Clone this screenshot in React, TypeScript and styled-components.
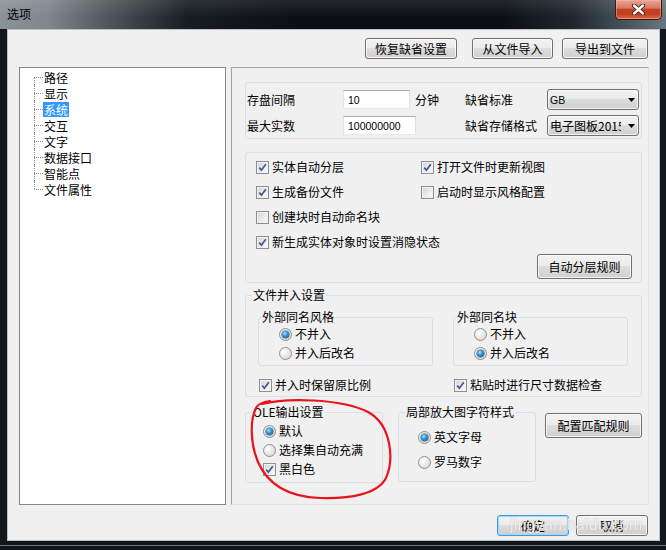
import React from 'react';
import styled, { createGlobalStyle } from 'styled-components';

const CJK = `"Noto Sans CJK SC", "Noto Sans CJK JP", sans-serif`;
const LATIN = `"Liberation Sans", Arial, sans-serif`;

const GlobalStyle = createGlobalStyle`
  html, body { margin: 0; padding: 0; background: #ffffff; }
  body { font-family: ${CJK}; font-size: 12px; color: #000; }
  * { box-sizing: border-box; }
`;

const Window = styled.div`
  position: relative;
  width: 666px;
  height: 550px;
  display: flex;
  flex-direction: column;
  background: #12171b;
  overflow: hidden;
`;

const TitleBar = styled.div`
  height: 29px;
  flex: none;
  display: flex;
  align-items: flex-start;
  padding: 0 4px 0 7px;
  background:
    linear-gradient(to bottom, rgba(255, 255, 255, 0.1), rgba(255, 255, 255, 0) 60%),
    linear-gradient(
      to right,
      #8b9297 0%,
      #80878d 7%,
      #4a5257 17%,
      #181d22 28%,
      #0b0e12 45%,
      #0b0e12 75%,
      #1f272e 86%,
      #4d5962 95%,
      #6a767f 100%
    );
`;

const Title = styled.span`
  margin-top: 6px;
  font: 12px/16px ${CJK};
  color: #000;
`;

const CloseButton = styled.div`
  margin-left: auto;
  width: 47px;
  height: 20px;
  border: 1px solid #3f1710;
  border-top: none;
  border-radius: 0 0 5px 5px;
  background: linear-gradient(#e7a796 0%, #d87763 42%, #c2411f 50%, #c0401f 75%, #dc6d4c 100%);
  box-shadow: inset 0 0 0 1px rgba(255, 190, 170, 0.45);
  display: flex;
  align-items: center;
  justify-content: center;
`;

const Frame = styled.div`
  flex: 1;
  display: flex;
  padding: 0 6px 9px 7px;
  box-shadow: inset 0 -4px 0 #12171b, inset 0 -5px 0 #6b747b;
`;

const Client = styled.div`
  position: relative;
  flex: 1;
  display: flex;
  flex-direction: column;
  background: #f0f0f0;
  border: 1px solid #b8c0c6;
  padding: 8px 10px 4px 11px;
`;

const ButtonBar = styled.div<{ $top?: number; $gap: number }>`
  flex: none;
  display: flex;
  justify-content: flex-end;
  gap: ${(p) => p.$gap}px;
  padding-right: 1px;
  margin-top: ${(p) => p.$top ?? 0}px;
`;

const PushButton = styled.button<{ $w: number; $h?: number; $primary?: boolean; $mr?: number; $mt?: number; $ml?: number }>`
  flex: none;
  width: ${(p) => p.$w}px;
  height: ${(p) => p.$h ?? 21}px;
  margin: ${(p) => p.$mt ?? 0}px ${(p) => p.$mr ?? 0}px 0 ${(p) => p.$ml ?? 0}px;
  padding: 0;
  border: 1px solid ${(p) => (p.$primary ? '#3c9be2' : '#707070')};
  border-radius: 3px;
  background: linear-gradient(#f2f2f2 0%, #ebebeb 49%, #dddddd 50%, #cfcfcf 100%);
  box-shadow: inset 0 0 0 1px ${(p) => (p.$primary ? 'rgba(150, 215, 250, 0.9)' : 'rgba(255, 255, 255, 0.75)')};
  font: 12px/1 ${CJK};
  color: #000;
  display: flex;
  align-items: center;
  justify-content: center;
`;

const Main = styled.div`
  flex: none;
  display: flex;
  gap: 5px;
  height: 438px;
  margin-top: 8px;
`;

const Tree = styled.div`
  width: 207px;
  background: #fff;
  border: 1px solid #828790;
  padding: 1px 0 0 14px;
`;

const TreeRow = styled.div`
  display: flex;
  align-items: center;
  height: 16px;
`;

const Connector = styled.span<{ $first?: boolean; $last?: boolean }>`
  align-self: stretch;
  width: 9px;
  flex: none;
  display: flex;
  flex-direction: column;
  &::before {
    content: '';
    flex: 1;
    border-left: 1px dotted ${(p) => (p.$first ? 'transparent' : '#8a8a8a')};
  }
  &::after {
    content: '';
    flex: 1;
    border-left: 1px dotted ${(p) => (p.$last ? 'transparent' : '#8a8a8a')};
    border-top: 1px dotted #8a8a8a;
  }
`;

const TreeLabel = styled.span<{ $selected?: boolean }>`
  height: 15px;
  padding: 0 1px;
  font: 12px/15px ${CJK};
  color: ${(p) => (p.$selected ? '#fff' : '#000')};
  background: ${(p) => (p.$selected ? '#3399ff' : 'transparent')};
`;

const Panel = styled.div`
  width: 418px;
  border: 1px solid;
  border-color: #a0a0a0 #e3e3e3 #e3e3e3 #a0a0a0;
  padding: 14px 6px 0 13px;
  display: flex;
  flex-direction: column;
`;

const BoxGroup = styled.div`
  border: 1px solid #d5dfe5;
  border-radius: 3px;
`;

const SettingsGrid = styled(BoxGroup)`
  display: grid;
  grid-template-columns: 96px 72px 50px 82px 92px;
  grid-auto-rows: 21px;
  row-gap: 5px;
  align-items: center;
  padding: 6px 0 2px 1px;
`;

const Text = styled.span`
  font: 12px/16px ${CJK};
  color: #000;
  white-space: nowrap;
`;

const TextBox = styled.input<{ $w: number }>`
  width: ${(p) => p.$w}px;
  height: 19px;
  padding: 0 0 0 4px;
  border: 1px solid;
  border-color: #abadb3 #dbdfe6 #e3e9ef #e2e3ea;
  background: #fff;
  font: 10.5px ${LATIN};
  color: #000;
  outline: none;
`;

const Combo = styled.div`
  width: 92px;
  height: 21px;
  border: 1px solid #707070;
  border-radius: 3px;
  background: linear-gradient(#f2f2f2 0%, #ebebeb 49%, #dddddd 50%, #cfcfcf 100%);
  box-shadow: inset 0 0 0 1px rgba(255, 255, 255, 0.7);
  display: flex;
  align-items: center;
  padding-left: 2px;
`;

const ComboText = styled.span<{ $latin?: boolean }>`
  flex: 1;
  overflow: hidden;
  white-space: nowrap;
  font: ${(p) => (p.$latin ? `10.5px/16px ${LATIN}` : `12px/16px ${CJK}`)};
  color: #000;
`;

const ComboArrow = styled.svg`
  flex: none;
  width: 7px;
  height: 4px;
  margin: 0 3px 0 7px;
`;

const CheckGroup = styled(BoxGroup)`
  margin-top: 13px;
  padding: 6px 9px 3px 10px;
  display: flex;
  flex-direction: column;
`;

const CheckGrid = styled.div<{ $cols: string }>`
  display: grid;
  grid-template-columns: ${(p) => p.$cols};
  grid-auto-rows: 16px;
  row-gap: 9px;
`;

const Option = styled.label`
  display: flex;
  align-items: center;
  gap: 3px;
  height: 16px;
  font: 12px/16px ${CJK};
  white-space: nowrap;
`;

const CheckBoxBox = styled.span`
  width: 13px;
  height: 13px;
  flex: none;
  border: 1px solid #8e8f8f;
  background: linear-gradient(135deg, #cfd3d8 0%, #eeeeee 60%, #fbfbfb 100%);
  box-shadow: inset 0 0 0 1px #f2f2f2;
  display: flex;
  align-items: center;
  justify-content: center;
`;

const RadioCircle = styled.span<{ $checked?: boolean }>`
  width: 13px;
  height: 13px;
  flex: none;
  border-radius: 50%;
  border: 1px solid #8e8f8f;
  background: radial-gradient(circle at 35% 35%, #ffffff 0%, #eaeaea 45%, #cfcfcf 100%);
  display: flex;
  align-items: center;
  justify-content: center;
  &::after {
    content: '';
    display: ${(p) => (p.$checked ? 'block' : 'none')};
    width: 7px;
    height: 7px;
    border-radius: 50%;
    background: radial-gradient(circle at 40% 35%, #a6e0fa 0%, #2f8fd3 45%, #0c4a86 100%);
    box-shadow: 0 0 0 0.5px #1d4670;
  }
`;

const ButtonRow = styled.div`
  display: flex;
  justify-content: flex-end;
  margin-top: 4px;
`;

const Fieldset = styled.fieldset<{ $w?: number; $mt?: number; $ml?: number }>`
  margin: ${(p) => p.$mt ?? 0}px 0 0 ${(p) => p.$ml ?? 0}px;
  padding: 0;
  min-width: 0;
  ${(p) => (p.$w ? `width: ${p.$w}px; flex: none;` : '')}
  border: 1px solid #d5dfe5;
  border-radius: 3px;
`;

const Legend = styled.legend<{ $ml: number }>`
  margin-left: ${(p) => p.$ml}px;
  padding: 0 1px;
  height: 16px;
  font: 12px/16px ${CJK};
  color: #000;
`;

const FieldBody = styled.div<{ $pad: string; $gap?: number }>`
  padding: ${(p) => p.$pad};
  display: flex;
  flex-direction: column;
  gap: ${(p) => p.$gap ?? 0}px;
`;

const SubGroups = styled.div`
  display: flex;
  gap: 20px;
`;

const BottomGroups = styled.div`
  display: flex;
  align-items: flex-start;
  margin-top: 7px;
`;

const Watermark = styled.span`
  position: absolute;
  left: 502px;
  top: 485px;
  font: 16px/20px ${LATIN};
  letter-spacing: 0.2px;
  color: rgba(255, 255, 255, 0.85);
  text-shadow: 0 0 1px rgba(110, 110, 110, 0.55);
  pointer-events: none;
`;

const Annotation = styled.svg`
  position: absolute;
  left: 0;
  top: 0;
  width: 666px;
  height: 550px;
  pointer-events: none;
`;

function CheckBox({ checked, label }: { checked?: boolean; label: string }) {
  return (
    <Option>
      <CheckBoxBox>
        {checked && (
          <svg width="9" height="9" viewBox="0 0 9 9">
            <path d="M1.3 4.6 L3.4 7.2 L7.8 1.2" fill="none" stroke="#42558c" strokeWidth="1.7" />
          </svg>
        )}
      </CheckBoxBox>
      {label}
    </Option>
  );
}

function Radio({ checked, label }: { checked?: boolean; label: string }) {
  return (
    <Option>
      <RadioCircle $checked={checked} />
      {label}
    </Option>
  );
}

function Select({ value, latin }: { value: string; latin?: boolean }) {
  return (
    <Combo>
      <ComboText $latin={latin}>{value}</ComboText>
      <ComboArrow viewBox="0 0 7 4">
        <polygon points="0,0 7,0 3.5,4" fill="#000" />
      </ComboArrow>
    </Combo>
  );
}

const treeItems = ['路径', '显示', '系统', '交互', '文字', '数据接口', '智能点', '文件属性'];

export default function App() {
  return (
    <>
      <GlobalStyle />
      <Window>
        <TitleBar>
          <Title>选项</Title>
          <CloseButton>
            <svg width="15" height="11" viewBox="0 0 15 11">
              <path d="M3 1.5 L12 9.5 M12 1.5 L3 9.5" stroke="#3a1a14" strokeWidth="4.2" strokeLinecap="round" />
              <path d="M3 1.5 L12 9.5 M12 1.5 L3 9.5" stroke="#ffffff" strokeWidth="2.4" strokeLinecap="round" />
            </svg>
          </CloseButton>
        </TitleBar>
        <Frame>
          <Client>
            <ButtonBar $gap={9}>
              <PushButton $w={92} $mr={6}>恢复缺省设置</PushButton>
              <PushButton $w={81}>从文件导入</PushButton>
              <PushButton $w={86}>导出到文件</PushButton>
            </ButtonBar>
            <Main>
              <Tree>
                {treeItems.map((t, i) => (
                  <TreeRow key={t}>
                    <Connector $first={i === 0} $last={i === treeItems.length - 1} />
                    <TreeLabel $selected={i === 2}>{t}</TreeLabel>
                  </TreeRow>
                ))}
              </Tree>
              <Panel>
                <SettingsGrid>
                  <Text>存盘间隔</Text>
                  <TextBox $w={67} value="10" readOnly />
                  <Text>分钟</Text>
                  <Text>缺省标准</Text>
                  <Select value="GB" latin />
                  <Text>最大实数</Text>
                  <TextBox $w={73} value="100000000" readOnly />
                  <span />
                  <Text>缺省存储格式</Text>
                  <Select value="电子图板2015" />
                </SettingsGrid>

                <CheckGroup>
                  <CheckGrid $cols="165px 1fr">
                    <CheckBox checked label="实体自动分层" />
                    <CheckBox checked label="打开文件时更新视图" />
                    <CheckBox checked label="生成备份文件" />
                    <CheckBox label="启动时显示风格配置" />
                    <CheckBox label="创建块时自动命名块" />
                    <span />
                    <CheckBox checked label="新生成实体对象时设置消隐状态" />
                  </CheckGrid>
                  <ButtonRow>
                    <PushButton $w={95} $h={25}>自动分层规则</PushButton>
                  </ButtonRow>
                </CheckGroup>

                <Fieldset $mt={4}>
                  <Legend $ml={6}>文件并入设置</Legend>
                  <FieldBody $pad="6px 13px 3px 12px">
                    <SubGroups>
                      <Fieldset $w={175}>
                        <Legend $ml={2}>外部同名风格</Legend>
                        <FieldBody $pad="1px 0 4px 20px" $gap={3}>
                          <Radio checked label="不并入" />
                          <Radio label="并入后改名" />
                        </FieldBody>
                      </Fieldset>
                      <Fieldset $w={175}>
                        <Legend $ml={2}>外部同名块</Legend>
                        <FieldBody $pad="1px 0 4px 20px" $gap={3}>
                          <Radio label="不并入" />
                          <Radio checked label="并入后改名" />
                        </FieldBody>
                      </Fieldset>
                    </SubGroups>
                    <FieldBody $pad="11px 0 0 1px">
                      <CheckGrid $cols="195px 1fr">
                        <CheckBox checked label="并入时保留原比例" />
                        <CheckBox checked label="粘贴时进行尺寸数据检查" />
                      </CheckGrid>
                    </FieldBody>
                  </FieldBody>
                </Fieldset>

                <BottomGroups>
                  <Fieldset $w={138}>
                    <Legend $ml={6}>OLE输出设置</Legend>
                    <FieldBody $pad="3px 0 5px 17px" $gap={3}>
                      <Radio checked label="默认" />
                      <Radio label="选择集自动充满" />
                      <CheckBox checked label="黑白色" />
                    </FieldBody>
                  </Fieldset>
                  <Fieldset $w={138} $ml={15}>
                    <Legend $ml={6}>局部放大图字符样式</Legend>
                    <FieldBody $pad="9px 0 11px 19px" $gap={9}>
                      <Radio checked label="英文字母" />
                      <Radio label="罗马数字" />
                    </FieldBody>
                  </Fieldset>
                  <PushButton $w={97} $h={25} $ml={9} $mt={9}>配置匹配规则</PushButton>
                </BottomGroups>
              </Panel>
            </Main>
            <ButtonBar $gap={7} $top={10}>
              <PushButton $w={72} $primary>确定</PushButton>
              <PushButton $w={72}>取消</PushButton>
            </ButtonBar>
            <Watermark>jingyan.baidu.com</Watermark>
          </Client>
        </Frame>
        <Annotation viewBox="0 0 666 550">
          <path
            d="M262 404 C285 398 340 398 368 412 C392 425 394 460 386 478 C378 494 350 499 320 498 C290 497 268 485 258 462 C250 443 250 420 256 408 C258 404 262 402 270 401"
            fill="none"
            stroke="#e8141c"
            strokeWidth="2.2"
            strokeLinecap="round"
          />
        </Annotation>
      </Window>
    </>
  );
}
